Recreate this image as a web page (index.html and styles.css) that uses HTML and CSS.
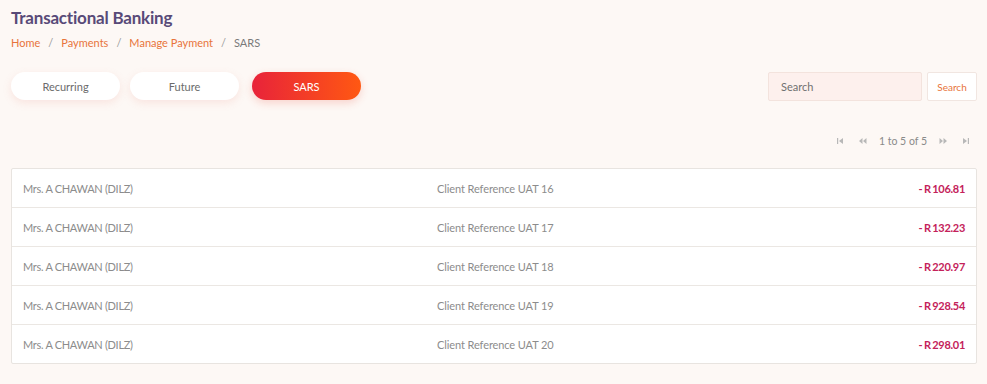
FILE: index.html
```html
<!DOCTYPE html>
<html lang="en">
<head>
    <meta charset="UTF-8">
    <meta name="viewport" content="width=device-width, initial-scale=1.0">
    <title>Transactional Banking - SARS</title>
    <link rel="stylesheet" href="styles.css">
</head>
<body>
    <div class="page">
        <h1 class="page-title">Transactional Banking</h1>
        <nav class="breadcrumb">
            <a href="#">Home</a><span class="sep">/</span>
            <a href="#">Payments</a><span class="sep">/</span>
            <a href="#">Manage Payment</a><span class="sep">/</span>
            <span class="current">SARS</span>
        </nav>

        <div class="toolbar">
            <div class="tabs">
                <button class="tab">Recurring</button>
                <button class="tab">Future</button>
                <button class="tab active">SARS</button>
            </div>
            <div class="search">
                <input type="text" class="search-input" placeholder="Search">
                <button class="search-btn">Search</button>
            </div>
        </div>

        <div class="pager">
            <span class="pager-icon">
                <svg width="8" height="8" viewBox="0 0 8 8"><rect x="1" y="1" width="1.2" height="6" fill="currentColor"/><path d="M7 1 L3 4 L7 7 Z" fill="currentColor"/></svg>
            </span>
            <span class="pager-icon">
                <svg width="9" height="8" viewBox="0 0 9 8"><path d="M4.5 1 L1 4 L4.5 7 Z M8.5 1 L5 4 L8.5 7 Z" fill="currentColor"/></svg>
            </span>
            <span class="pager-text">1 to 5 of 5</span>
            <span class="pager-icon">
                <svg width="9" height="8" viewBox="0 0 9 8"><path d="M0.5 1 L4 4 L0.5 7 Z M4.5 1 L8 4 L4.5 7 Z" fill="currentColor"/></svg>
            </span>
            <span class="pager-icon">
                <svg width="8" height="8" viewBox="0 0 8 8"><path d="M1 1 L5 4 L1 7 Z" fill="currentColor"/><rect x="5.8" y="1" width="1.2" height="6" fill="currentColor"/></svg>
            </span>
        </div>

        <div class="list">
            <div class="row">
                <span class="col-name">Mrs. A CHAWAN (DILZ)</span>
                <span class="col-ref">Client Reference UAT 16</span>
                <span class="col-amount">- R 106.81</span>
            </div>
            <div class="row">
                <span class="col-name">Mrs. A CHAWAN (DILZ)</span>
                <span class="col-ref">Client Reference UAT 17</span>
                <span class="col-amount">- R 132.23</span>
            </div>
            <div class="row">
                <span class="col-name">Mrs. A CHAWAN (DILZ)</span>
                <span class="col-ref">Client Reference UAT 18</span>
                <span class="col-amount">- R 220.97</span>
            </div>
            <div class="row">
                <span class="col-name">Mrs. A CHAWAN (DILZ)</span>
                <span class="col-ref">Client Reference UAT 19</span>
                <span class="col-amount">- R 928.54</span>
            </div>
            <div class="row">
                <span class="col-name">Mrs. A CHAWAN (DILZ)</span>
                <span class="col-ref">Client Reference UAT 20</span>
                <span class="col-amount">- R 298.01</span>
            </div>
        </div>
    </div>
</body>
</html>
```

FILE: styles.css
```css
* {
    margin: 0;
    padding: 0;
    box-sizing: border-box;
    font-family: 'Lato', 'Open Sans', sans-serif;
}

body {
    background: #fdf8f5;
    min-height: 100vh;
}

.page {
    padding: 7px 10px 20px 11px;
}

.page-title {
    color: #584a78;
    font-size: 17px;
    font-weight: 700;
    line-height: 22px;
    letter-spacing: -0.2px;
}

.breadcrumb {
    display: flex;
    align-items: center;
    margin-top: 6px;
    font-size: 11px;
    line-height: 16px;
}

.breadcrumb a {
    color: #e8743b;
    text-decoration: none;
}

.breadcrumb .sep {
    color: #9a9a9a;
    margin: 0 8px;
}

.breadcrumb .current {
    color: #7a7a7a;
}

.toolbar {
    display: flex;
    justify-content: space-between;
    align-items: center;
    margin-top: 21px;
}

.tabs {
    display: flex;
    gap: 10px;
    padding-bottom: 1px;
}

.tab {
    width: 109px;
    height: 28px;
    border: none;
    border-radius: 14px;
    background: #ffffff;
    color: #6b6b6b;
    font-size: 11px;
    cursor: pointer;
    box-shadow: 0 3px 8px rgba(230, 120, 110, 0.15);
}

.tab:nth-child(3) {
    margin-left: 3px;
}

.tab.active {
    background: linear-gradient(90deg, #e8233a, #ff5812);
    color: #ffffff;
    box-shadow: 0 3px 8px rgba(232, 60, 40, 0.2);
}

.search {
    display: flex;
    gap: 5px;
}

.search-input {
    width: 154px;
    height: 29px;
    border: 1px solid #f3e3dd;
    border-radius: 2px;
    background: #fdf0ed;
    padding: 0 12px;
    font-size: 11px;
    color: #555;
}

.search-input::placeholder {
    color: #707070;
}

.search-btn {
    width: 50px;
    height: 29px;
    border: 1px solid #f1e6e1;
    border-radius: 2px;
    background: #ffffff;
    color: #e8743b;
    font-size: 10px;
    cursor: pointer;
}

.pager {
    display: flex;
    justify-content: flex-end;
    align-items: center;
    margin-top: 29px;
    padding-right: 0;
    color: #b8b8b8;
    height: 22px;
}

.pager-icon {
    display: flex;
    align-items: center;
    margin: 0 7px;
}

.pager-text {
    color: #8a8a8a;
    font-size: 10.5px;
    margin: 0 5px;
}

.list {
    margin-top: 16px;
    background: #ffffff;
    border: 1px solid #e8e4e0;
    border-radius: 2px;
}

.row {
    display: flex;
    align-items: center;
    height: 39px;
    padding: 0 11px;
    border-top: 1px solid #ebe7e3;
    font-size: 11px;
}

.row:first-child {
    border-top: none;
    height: 38px;
}

.col-name {
    width: 414px;
    color: #8c8c8c;
    letter-spacing: -0.3px;
}

.col-ref {
    flex: 1;
    color: #8c8c8c;
    letter-spacing: -0.1px;
}

.col-amount {
    color: #c4225a;
    font-weight: 700;
    letter-spacing: -0.3px;
    word-spacing: -0.8px;
}
```
